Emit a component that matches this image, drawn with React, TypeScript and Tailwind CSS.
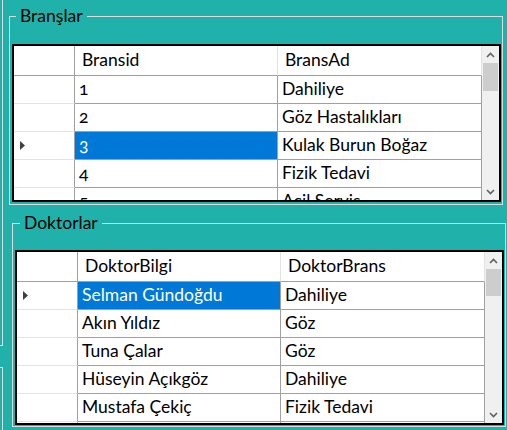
import React from "react";

/* Two WinForms-style group boxes with DataGridViews on a teal form. */

const branslar = [
  ["1", "Dahiliye"],
  ["2", "Göz Hastalıkları"],
  ["3", "Kulak Burun Boğaz"],
  ["4", "Fizik Tedavi"],
  ["5", "Acil Servis"],
];

const doktorlar = [
  ["Selman Gündoğdu", "Dahiliye"],
  ["Akın Yıldız", "Göz"],
  ["Tuna Çalar", "Göz"],
  ["Hüseyin Açıkgöz", "Dahiliye"],
  ["Mustafa Çekiç", "Fizik Tedavi"],
  ["", ""],
];

function Chevron({ up }: { up?: boolean }) {
  return (
    <svg width="9" height="6" viewBox="0 0 9 6">
      <path
        d={up ? "M1 5 L4.5 1.5 L8 5" : "M1 1 L4.5 4.5 L8 1"}
        stroke="#606060"
        strokeWidth="1.6"
        fill="none"
      />
    </svg>
  );
}

function Grid({
  headers,
  rows,
  selected,
  height,
  thumb,
  firstNumeric,
}: {
  headers: [string, string];
  rows: string[][];
  selected: number;
  height: string;
  thumb: string;
  firstNumeric?: boolean;
}) {
  return (
    <div className={`flex w-[489px] border-2 border-black bg-white ${height}`}>
      <div className="flex flex-1 flex-col overflow-hidden">
        <div className="flex h-[30px] shrink-0">
          <div className="w-[61px] border-r border-b border-r-[#a0a0a0] border-b-[#a0a0a0]" />
          <div className="flex w-[203px] items-center border-r border-b border-r-[#e3e3e3] border-b-[#a0a0a0] pl-[7px]">
            {headers[0]}
          </div>
          <div className="flex w-[204px] items-center border-r border-b border-r-[#e3e3e3] border-b-[#a0a0a0] pl-[7px]">
            {headers[1]}
          </div>
        </div>
        {rows.map((r, i) => (
          <div key={i} className="flex h-[28px] shrink-0">
            <div className="flex w-[61px] items-center border-r border-b border-r-[#a0a0a0] border-b-[#e3e3e3] pl-[6px]">
              {i === selected ? (
                <svg width="5" height="9" viewBox="0 0 5 9">
                  <polygon points="0,0 5,4.5 0,9" fill="#404040" />
                </svg>
              ) : null}
            </div>
            <div
              className={`flex w-[203px] items-center border-r border-b border-[#a0a0a0] pl-[4px] ${
                i === selected ? "bg-[#0078d7] text-white" : ""
              } ${firstNumeric ? "oldstyle-nums" : ""}`}
            >
              {r[0]}
            </div>
            <div className="flex w-[204px] items-center border-r border-b border-[#a0a0a0] pl-[4px]">
              {r[1]}
            </div>
          </div>
        ))}
      </div>
      <div className="flex w-[17px] shrink-0 flex-col bg-[#f0f0f0]">
        <div className="flex h-[17px] items-center justify-center">
          <Chevron up />
        </div>
        <div className={`mx-px bg-[#cdcdcd] ${thumb}`} />
        <div className="flex-1" />
        <div className="flex h-[17px] items-center justify-center">
          <Chevron />
        </div>
      </div>
    </div>
  );
}

export default function App() {
  return (
    <div className="flex h-[430px] w-[507px] overflow-hidden bg-[#20b2aa] font-['Lato','Noto_Sans',sans-serif] text-[17.5px] text-black">
      <div className="flex w-[3px] shrink-0 flex-col">
        <div className="h-[346px] border-r border-b border-[#dcdcdc]" />
        <div className="h-[21px]" />
        <div className="flex-1 border-t border-r border-[#dcdcdc]" />
      </div>

      <div className="flex flex-col">
        <fieldset className="mt-[6px] ml-[6px] w-[494px] border border-[#dcdcdc] pt-[18px] pr-px pb-[2px] pl-[2px]">
          <legend className="ml-[4px] px-[4px] leading-[20px]">Branşlar</legend>
          <Grid
            headers={["Bransid", "BransAd"]}
            rows={branslar}
            selected={2}
            height="h-[158px]"
            thumb="h-[28px]"
            firstNumeric
          />
        </fieldset>

        <fieldset className="mt-[8px] ml-[9px] w-[494px] border border-[#dcdcdc] pt-[17px] pr-px pb-px pl-[2px]">
          <legend className="ml-[5px] px-[4px] leading-[20px]">Doktorlar</legend>
          <Grid
            headers={["DoktorBilgi", "DoktorBrans"]}
            rows={doktorlar}
            selected={0}
            height="h-[175px]"
            thumb="h-[27px]"
          />
        </fieldset>
      </div>
    </div>
  );
}
